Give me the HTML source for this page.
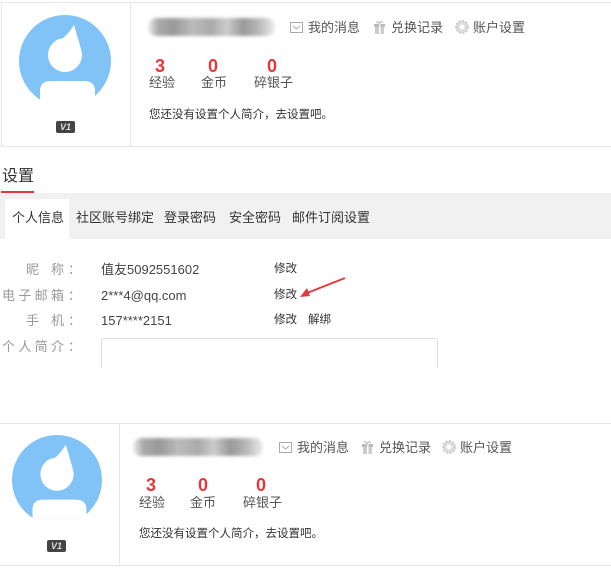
<!DOCTYPE html>
<html><head><meta charset="utf-8"><style>
*{margin:0;padding:0;box-sizing:border-box}
body{width:611px;height:569px;background:#fff;position:relative;overflow:hidden;font-family:"Liberation Sans","Noto Sans CJK SC",sans-serif;color:#333}
.a{position:absolute;white-space:nowrap;line-height:1}
.num{color:#e4393c;font-weight:bold;font-size:18px}
.lbl{font-size:13px;color:#555}
.lab{position:absolute;left:2px;width:62px;display:flex;justify-content:space-between;font-size:13px;color:#999;line-height:1}
.lab.s{left:26px;width:38px}
.col{position:absolute;left:68px;font-size:13px;color:#999;line-height:1}
.v{font-size:13px;color:#444}
.blur{position:absolute;background:linear-gradient(90deg,#eee 0%,#aaa 8%,#999 20%,#bbb 35%,#aaa 50%,#ccc 62%,#999 75%,#bbb 88%,#eee 100%);filter:blur(1.5px);border-radius:8px}
.badge{position:absolute;width:19px;height:12px;background:#444;border-radius:2px;color:#ddd;font-size:9px;font-weight:bold;font-style:italic;text-align:center;line-height:12px}
</style></head><body>

<!-- card 1 -->
<div style="position:absolute;left:1px;top:2px;width:620px;height:145px;border:1px solid #e6e6e6"></div>
<div style="position:absolute;left:130px;top:3px;width:1px;height:143px;background:#e6e6e6"></div>
<svg class="a" style="left:19px;top:15px" width="92" height="92" viewBox="0 0 92 92">
<defs><clipPath id="c1"><rect x="0" y="0" width="92" height="85"/></clipPath></defs>
<circle cx="46" cy="46" r="46" fill="#82c3f7" clip-path="url(#c1)"/>
<circle cx="46" cy="40" r="17" fill="#fff"/>
<path d="M44 23.2 Q50 18 55 10 Q58 20 62 34 Z" fill="#fff"/>
<path d="M21 85 L21 76 Q21 66 32 66 L65 66 Q76 66 76 76 L76 85Z" fill="#fff"/>
</svg>
<div class="badge" style="left:56px;top:121px">V1</div>
<div class="blur" style="left:148px;top:18px;width:127px;height:18px"></div>
<svg class="a" style="left:290px;top:22px" width="13" height="11"><rect x="0.5" y="0.5" width="12" height="10" fill="none" stroke="#aaa"/><path d="M3 4 L6.5 7 L10 4" fill="none" stroke="#aaa"/></svg>
<div class="a lbl" style="left:308px;top:21px">我的消息</div>
<svg class="a" style="left:373px;top:20px" width="13" height="14"><rect x="1" y="4" width="11" height="3" fill="#bbb"/><rect x="2" y="7" width="9" height="7" fill="#ccc"/><rect x="6" y="4" width="1.5" height="10" fill="#fff"/><path d="M3 3 Q5 0 6.5 4 Q8 0 10 3" fill="none" stroke="#bbb"/></svg>
<div class="a lbl" style="left:391px;top:21px">兑换记录</div>
<svg class="a" style="left:455px;top:20px" width="14" height="14"><circle cx="7" cy="7" r="6" fill="#ddd" stroke="#ccc" stroke-width="2" stroke-dasharray="2 1.5"/><circle cx="7" cy="7" r="2.5" fill="#fff"/></svg>
<div class="a lbl" style="left:473px;top:21px">账户设置</div>
<div class="a num" style="left:155px;top:57px">3</div>
<div class="a lbl" style="left:149px;top:76px">经验</div>
<div class="a num" style="left:208px;top:57px">0</div>
<div class="a lbl" style="left:201px;top:76px">金币</div>
<div class="a num" style="left:267px;top:57px">0</div>
<div class="a lbl" style="left:254px;top:76px">碎银子</div>
<div class="a" style="left:149px;top:110px;font-size:11.5px;color:#333">您还没有设置个人简介，去设置吧。</div>

<!-- settings -->
<div class="a" style="left:2px;top:169px;font-size:16px;color:#333">设置</div>
<div style="position:absolute;left:1px;top:191px;width:33px;height:2px;background:#e4393c"></div>
<div style="position:absolute;left:0;top:193px;width:611px;height:46px;background:#f1f1f1"></div>
<div style="position:absolute;left:5px;top:199px;width:64px;height:40px;background:#fff"></div>
<div class="a" style="left:12px;top:211px;font-size:13px;color:#333">个人信息</div>
<div class="a" style="left:76px;top:211px;font-size:13px;color:#333">社区账号绑定</div>
<div class="a" style="left:164px;top:211px;font-size:13px;color:#333">登录密码</div>
<div class="a" style="left:229px;top:211px;font-size:13px;color:#333">安全密码</div>
<div class="a" style="left:292px;top:211px;font-size:13px;color:#333">邮件订阅设置</div>

<div class="lab s" style="top:263px"><span>昵</span><span>称</span></div><div class="col" style="top:263px">：</div>
<div class="a v" style="left:101px;top:263px">值友5092551602</div>
<div class="a" style="left:274px;top:264px;font-size:11.5px">修改</div>
<div class="lab" style="top:289px"><span>电</span><span>子</span><span>邮</span><span>箱</span></div><div class="col" style="top:289px">：</div>
<div class="a v" style="left:101px;top:289px">2***4@qq.com</div>
<div class="a" style="left:274px;top:290px;font-size:11.5px">修改</div>
<div class="lab s" style="top:314px"><span>手</span><span>机</span></div><div class="col" style="top:314px">：</div>
<div class="a v" style="left:101px;top:314px">157****2151</div>
<div class="a" style="left:274px;top:315px;font-size:11.5px">修改</div>
<div class="a" style="left:308px;top:315px;font-size:11.5px">解绑</div>
<div class="lab" style="top:340px"><span>个</span><span>人</span><span>简</span><span>介</span></div><div class="col" style="top:340px">：</div>
<div style="position:absolute;left:101px;top:338px;width:337px;height:40px;border:1px solid #ddd;border-radius:3px"></div>
<div style="position:absolute;left:0;top:368px;width:611px;height:20px;background:#fff"></div>
<svg class="a" style="left:295px;top:275px" width="55" height="25"><path d="M50 3 L12 18" stroke="#e4393c" stroke-width="2"/><path d="M5 22 L12 13 L15 21Z" fill="#e4393c"/></svg>

<!-- card 2 -->
<div style="position:absolute;left:-2px;top:423px;width:620px;height:143px;border:1px solid #e6e6e6"></div>
<div style="position:absolute;left:119px;top:424px;width:1px;height:141px;background:#e6e6e6"></div>
<svg class="a" style="left:12px;top:435px" width="90" height="90" viewBox="0 0 92 92">
<defs><clipPath id="c2"><rect x="0" y="0" width="92" height="85"/></clipPath></defs>
<circle cx="46" cy="46" r="46" fill="#82c3f7" clip-path="url(#c2)"/>
<circle cx="46" cy="40" r="17" fill="#fff"/>
<path d="M44 23.2 Q50 18 55 10 Q58 20 62 34 Z" fill="#fff"/>
<path d="M21 85 L21 76 Q21 66 32 66 L65 66 Q76 66 76 76 L76 85Z" fill="#fff"/>
</svg>
<div class="badge" style="left:47px;top:540px">V1</div>
<div class="blur" style="left:133px;top:438px;width:130px;height:18px"></div>
<svg class="a" style="left:279px;top:442px" width="13" height="11"><rect x="0.5" y="0.5" width="12" height="10" fill="none" stroke="#aaa"/><path d="M3 4 L6.5 7 L10 4" fill="none" stroke="#aaa"/></svg>
<div class="a lbl" style="left:297px;top:441px">我的消息</div>
<svg class="a" style="left:361px;top:440px" width="13" height="14"><rect x="1" y="4" width="11" height="3" fill="#bbb"/><rect x="2" y="7" width="9" height="7" fill="#ccc"/><rect x="6" y="4" width="1.5" height="10" fill="#fff"/><path d="M3 3 Q5 0 6.5 4 Q8 0 10 3" fill="none" stroke="#bbb"/></svg>
<div class="a lbl" style="left:379px;top:441px">兑换记录</div>
<svg class="a" style="left:442px;top:440px" width="14" height="14"><circle cx="7" cy="7" r="6" fill="#ddd" stroke="#ccc" stroke-width="2" stroke-dasharray="2 1.5"/><circle cx="7" cy="7" r="2.5" fill="#fff"/></svg>
<div class="a lbl" style="left:460px;top:441px">账户设置</div>
<div class="a num" style="left:146px;top:476px">3</div>
<div class="a lbl" style="left:139px;top:496px">经验</div>
<div class="a num" style="left:198px;top:476px">0</div>
<div class="a lbl" style="left:190px;top:496px">金币</div>
<div class="a num" style="left:256px;top:476px">0</div>
<div class="a lbl" style="left:243px;top:496px">碎银子</div>
<div class="a" style="left:139px;top:529px;font-size:11.5px;color:#333">您还没有设置个人简介，去设置吧。</div>
</body></html>
